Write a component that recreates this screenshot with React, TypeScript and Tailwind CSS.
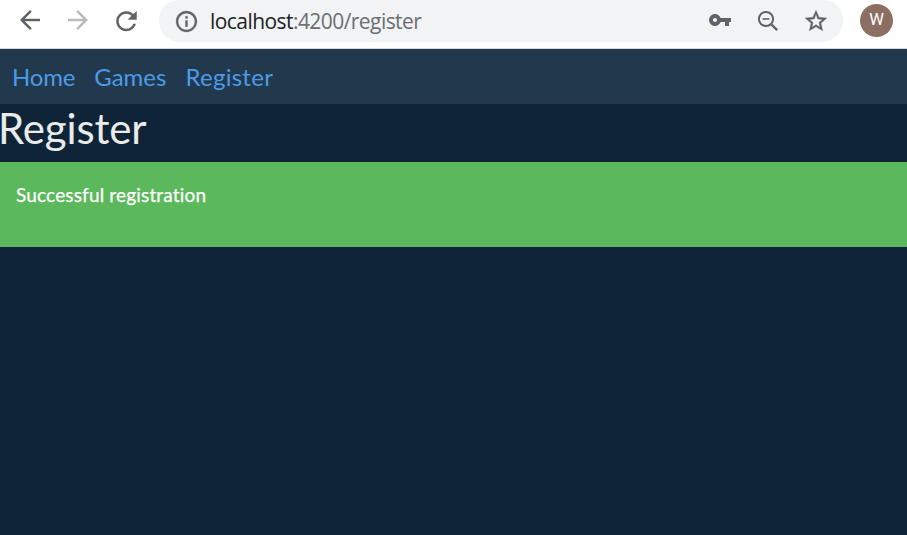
import type { ReactNode } from "react";

function Icon({ className, viewBox = "0 0 24 24", children }: { className: string; viewBox?: string; children: ReactNode }) {
  return (
    <svg className={`block shrink-0 ${className}`} viewBox={viewBox} fill="currentColor" aria-hidden="true">
      {children}
    </svg>
  );
}

function Toolbar() {
  return (
    <header className="flex h-[49px] items-start border-b border-[#d5d8db] bg-white pl-[15px] text-[#5f6368]">
      <Icon className="mt-[5px] size-[30px]">
        <path d="M20 11H7.83l5.59-5.59L12 4l-8 8 8 8 1.41-1.41L7.83 13H20v-2z" />
      </Icon>
      <Icon className="mt-[5px] ml-[18px] size-[30px] text-[#bababc]">
        <path d="M12 4l-1.41 1.41L16.17 11H4v2h12.17l-5.58 5.59L12 20l8-8z" />
      </Icon>
      <Icon className="mt-[6px] ml-[18px] size-[30px]">
        <path d="M17.9 6.4C16.4 4.9 14.3 4.1 12.2 4.1c-4.42 0-7.99 3.58-7.99 8s3.57 8 7.99 8c3.73 0 6.84-2.55 7.73-6h-2.08c-.82 2.33-3.04 4-5.65 4-3.31 0-6-2.69-6-6s2.69-6 6-6c1.66 0 3.14.69 4.22 1.78L13.4 11h7.2V4l-2.7 2.4z" />
      </Icon>
      <div className="ml-[18px] flex h-[42px] w-[684px] items-start rounded-b-[21px] rounded-t-[20px] bg-[#f1f3f4] pl-[15px]">
        <Icon className="mt-[9px] size-[25px]">
          <path
            d="M11 17h2v-6h-2v6zm1-15C6.48 2 2 6.48 2 12s4.48 10 10 10 10-4.48 10-10S17.52 2 12 2zm0 18c-4.41 0-8-3.59-8-8s3.59-8 8-8 8 3.59 8 8-3.59 8-8 8zM11 9h2V7h-2v2z"
            stroke="currentColor"
            strokeWidth="0.3"
          />
        </Icon>
        <div className="mt-[6px] ml-[11px] w-[498px] font-['Open_Sans','Noto_Sans',sans-serif] text-[21px] leading-[30px] tracking-[-0.56px] text-[#6b6e72]">
          <span className="text-[#202124]">localhost</span>:4200/register
        </div>
        <Icon className="mt-[8px] size-[24px]">
          <path d="M12.65 10C11.83 7.67 9.61 6 7 6c-3.31 0-6 2.69-6 6s2.69 6 6 6c2.61 0 4.83-1.67 5.65-4H17v4h4v-4h2v-4H12.65zM7 14c-1.1 0-2-.9-2-2s.9-2 2-2 2 .9 2 2-.9 2-2 2z" />
        </Icon>
        <Icon className="mt-[10px] ml-[25px] size-[22px]" viewBox="0 0 22 22">
          <g fill="none" stroke="currentColor" strokeWidth="2">
            <circle cx="9" cy="9" r="7.1" />
            <path d="M14 14l6.2 6.2" strokeWidth="2.4" />
            <path d="M5.5 9h7" strokeWidth="1.6" />
          </g>
        </Icon>
        <Icon className="mt-[8px] ml-[24px] size-[26px]">
          <path
            d="M22 9.24l-7.19-.62L12 2 9.19 8.63 2 9.24l5.46 4.73L5.82 21 12 17.27 18.18 21l-1.63-7.03L22 9.24zM12 15.4l-3.76 2.27 1-4.28-3.32-2.88 4.38-.38L12 6.1l1.71 4.04 4.38.38-3.32 2.88 1 4.28L12 15.4z"
            stroke="currentColor"
            strokeWidth="0.35"
          />
        </Icon>
      </div>
      <div className="mt-[4px] ml-[17px] flex size-[33px] items-center justify-center rounded-full bg-[#8d6e63] font-[Roboto,sans-serif] text-[16.5px] text-white">
        W
      </div>
    </header>
  );
}

export default function App() {
  return (
    <div className="min-h-screen bg-[#0f2537] font-[Lato,sans-serif] text-[#ebebeb] [font-variant-ligatures:none]">
      <Toolbar />
      <nav className="flex h-[55px] items-center bg-[#22384c] pl-[12px] text-[24px] leading-9 text-[#4c9be8]">
        <a className="mr-[19px] tracking-[-0.2px]">Home</a>
        <a className="mr-[19px]">Games</a>
        <a className="tracking-[0.28px]">Register</a>
      </nav>
      <h1 className="-ml-[2px] h-[58px] text-[42px] leading-[48px] tracking-[-0.15px]">Register</h1>
      <div className="h-[85px] bg-[#5cb85c] px-4 pt-[18px] text-[19px] leading-[30px] tracking-[0.16px] text-white [-webkit-text-stroke:0.25px_white]">
        Successful registration
      </div>
    </div>
  );
}
